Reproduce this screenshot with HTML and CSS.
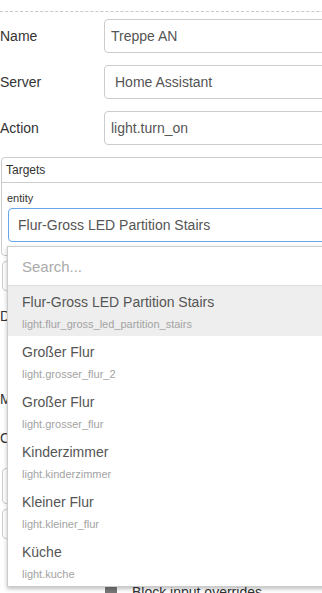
FILE: index.html
```html
<!DOCTYPE html>
<html>
<head>
<meta charset="utf-8">
<link rel="stylesheet" href="styles.css">
</head>
<body>
<div class="form">
  <div class="divider"></div>
  <div class="rows">
    <div class="row"><span class="label">Name</span><div class="input">Treppe AN</div></div>
    <div class="row"><span class="label">Server</span><div class="input select">Home Assistant</div></div>
    <div class="row"><span class="label">Action</span><div class="input">light.turn_on</div></div>
  </div>
  <div class="targets">
    <div class="targets-head">Targets</div>
    <div class="targets-body">
      <div class="field-label">entity</div>
      <div class="entity-input">Flur-Gross LED Partition Stairs</div>
    </div>
  </div>
  <div class="aux-box"></div>
  <div class="row row-data"><span class="label">Data</span></div>
  <div class="row row-merge"><span class="label">Mode</span></div>
  <div class="row row-c"><span class="label">Config</span></div>
  <div class="aux-box tall"></div>
  <div class="aux-box mid"></div>
  <div class="check-row"><span class="checkbox"></span><span class="check-text">Block input overrides</span></div>
</div>

<div class="dropdown">
  <div class="search">Search...</div>
  <ul class="options">
    <li class="option active"><div class="opt-name">Flur-Gross LED Partition Stairs</div><div class="opt-id">light.flur_gross_led_partition_stairs</div></li>
    <li class="option"><div class="opt-name">Großer Flur</div><div class="opt-id">light.grosser_flur_2</div></li>
    <li class="option"><div class="opt-name">Großer Flur</div><div class="opt-id">light.grosser_flur</div></li>
    <li class="option"><div class="opt-name">Kinderzimmer</div><div class="opt-id">light.kinderzimmer</div></li>
    <li class="option"><div class="opt-name">Kleiner Flur</div><div class="opt-id">light.kleiner_flur</div></li>
    <li class="option"><div class="opt-name">Küche</div><div class="opt-id">light.kuche</div></li>
  </ul>
</div>
</body>
</html>
```

FILE: styles.css
```css
html, body {
  margin: 0;
  padding: 0;
}
body {
  position: relative;
  width: 322px;
  height: 593px;
  overflow: hidden;
  background: #fff;
  font-family: "Liberation Sans", Arial, sans-serif;
  color: #333;
}
.form {
  width: 460px;
  padding-top: 11px;
}
.divider {
  border-top: 1px dashed #c8c8c8;
}
.rows {
  display: flex;
  flex-direction: column;
  gap: 12px;
  margin-top: 7px;
}
.row {
  display: flex;
  align-items: center;
  height: 34px;
}
.label {
  width: 104px;
  flex: none;
  font-size: 14px;
  color: #333;
  white-space: nowrap;
}
.input {
  box-sizing: border-box;
  width: 300px;
  height: 34px;
  border: 1px solid #ccc;
  border-radius: 4px;
  padding-left: 6px;
  font-size: 14px;
  line-height: 32px;
  color: #555;
}
.input.select {
  padding-left: 10px;
}
.targets {
  margin-top: 12px;
  margin-left: 1px;
  width: 420px;
  border: 1px solid #ccc;
  border-radius: 4px;
}
.targets-head {
  height: 24px;
  line-height: 24px;
  padding-left: 4px;
  font-size: 12px;
  color: #333;
  border-bottom: 1px solid #ccc;
}
.targets-body {
  padding: 9px 4px 13px 5px;
}
.field-label {
  font-size: 11px;
  line-height: 13px;
  color: #333;
  margin-bottom: 3px;
}
.entity-input {
  box-sizing: border-box;
  margin-left: 1px;
  height: 34px;
  border: 1px solid #66a6e8;
  border-radius: 4px;
  padding-left: 9px;
  font-size: 14px;
  line-height: 32px;
  color: #555;
}
.aux-box {
  box-sizing: border-box;
  margin-top: 5px;
  margin-left: 2px;
  width: 60px;
  height: 30px;
  border: 1px solid #ccc;
  border-radius: 4px;
}
.row-data {
  margin-top: 8px;
}
.row-merge {
  margin-top: 49px;
}
.row-c {
  margin-top: 5px;
}
.aux-box.tall {
  margin-top: 13px;
  height: 36px;
}
.aux-box.mid {
  margin-top: 5px;
  height: 30px;
}
.check-row {
  display: flex;
  align-items: center;
  margin-top: 45px;
  margin-left: 105px;
  height: 17px;
}
.checkbox {
  width: 12px;
  height: 13px;
  background: #777;
  border-radius: 2px;
  margin-right: 15px;
}
.check-text {
  font-size: 14px;
  line-height: 17px;
  color: #333;
}
.dropdown {
  position: absolute;
  left: 7px;
  top: 246px;
  width: 400px;
  background: #fff;
  border: 1px solid #ccc;
  box-shadow: 0 2px 4px rgba(0, 0, 0, 0.25);
}
.search {
  height: 38px;
  line-height: 40px;
  padding-left: 14px;
  font-size: 15px;
  color: #aaa;
  border-bottom: 1px solid #ddd;
}
.options {
  list-style: none;
  margin: 0;
  padding: 0;
}
.option {
  box-sizing: border-box;
  height: 50px;
  padding: 7px 0 0 14px;
}
.option.active {
  background: #eee;
}
.opt-name {
  font-size: 14px;
  line-height: 18px;
  color: #555;
}
.opt-id {
  margin-top: 7px;
  font-size: 11px;
  line-height: 13px;
  color: #a3a3a3;
}
```
